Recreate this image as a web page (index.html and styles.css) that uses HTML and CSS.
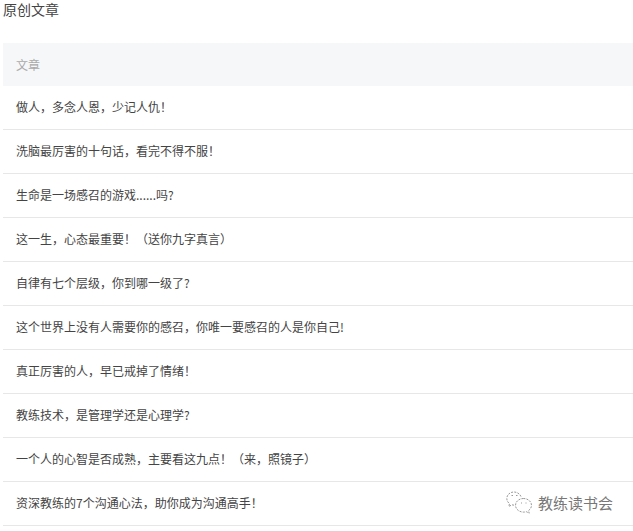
FILE: index.html
```html
<!DOCTYPE html>
<html lang="zh">
<head>
<meta charset="utf-8">
<title>原创文章</title>
<link rel="stylesheet" href="styles.css">
</head>
<body>
<h1 class="title">原创文章</h1>
<section class="list">
  <div class="list-head">文章</div>
  <div class="row">做人，多念人恩，少记人仇！</div>
  <div class="row">洗脑最厉害的十句话，看完不得不服！</div>
  <div class="row">生命是一场感召的游戏......吗?</div>
  <div class="row">这一生，心态最重要！（送你九字真言）</div>
  <div class="row">自律有七个层级，你到哪一级了?</div>
  <div class="row">这个世界上没有人需要你的感召，你唯一要感召的人是你自己!</div>
  <div class="row">真正厉害的人，早已戒掉了情绪！</div>
  <div class="row">教练技术，是管理学还是心理学?</div>
  <div class="row">一个人的心智是否成熟，主要看这九点！（来，照镜子）</div>
  <div class="row">资深教练的7个沟通心法，助你成为沟通高手！</div>
</section>
<div class="mark">
  <svg class="mark-icon" width="27" height="23" viewBox="0 0 27 23" fill="none" stroke="#999" stroke-width="1" stroke-dasharray="2 1.2">
    <path d="M15 5.5C13.8 2.8 11 1 8 1 3.9 1 .8 3.9.8 7.5c0 2.100 1 3.900 2.700 5.100L2.800 15.500l3.200-1.700c.6.200 1.300.3 2 .4"/>
    <path d="M17.500 7.500c-4.400 0-8 3-8 6.800s3.600 6.800 8 6.800c1 0 1.900-.1 2.800-.4l2.900 1.500-.7-2.600c1.800-1.200 3-3.100 3-5.300 0-3.800-3.600-6.800-8-6.800z"/>
    <path d="M5.500 4.500h1.500M10 4.500h1.500M15 12h1M19.500 12h1" stroke-dasharray="none"/>
  </svg>
  <span class="mark-text">教练读书会</span>
</div>
</body>
</html>
```
FILE: styles.css
```css
html, body {
  margin: 0;
  padding: 0;
  background: #fff;
}
body {
  position: relative;
  height: 531px;
  overflow: hidden;
  font-family: "Microsoft YaHei", "Noto Sans CJK SC", "Liberation Sans", sans-serif;
  color: #444;
}
.title {
  margin: 0;
  padding: 0 0 0 3px;
  height: 43px;
  font-size: 14px;
  font-weight: 400;
  line-height: 19px;
  color: #444;
}
.list {
  margin-left: 3px;
}
.list-head {
  height: 43px;
  line-height: 43px;
  padding-left: 13px;
  font-size: 12px;
  color: #aaa;
  background: #f6f7f9;
}
.row {
  box-sizing: border-box;
  height: 44px;
  line-height: 42px;
  padding-left: 13px;
  font-size: 12px;
  color: #444;
  border-bottom: 1px solid #e7e7e7;
}
.mark {
  position: absolute;
  left: 506px;
  top: 491px;
  display: flex;
  align-items: center;
  gap: 5px;
}
.mark-text {
  font-size: 15px;
  color: #777;
  letter-spacing: 0;
}
```
